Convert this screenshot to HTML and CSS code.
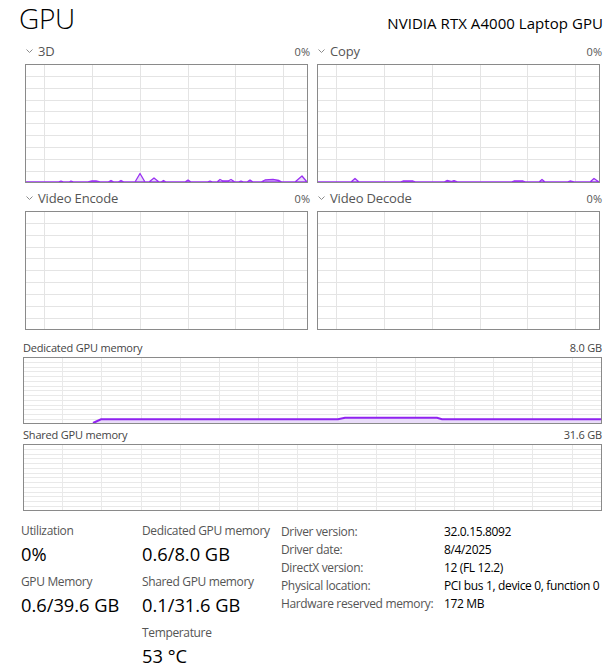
FILE: index.html
```html
<!DOCTYPE html>
<html>
<head>
<meta charset="utf-8">
<link rel="stylesheet" href="styles.css">
</head>
<body>
<div class="app">
  <header class="top">
    <h1 class="title">GPU</h1>
    <div class="model">NVIDIA RTX A4000 Laptop GPU</div>
  </header>

  <section class="engines">
    <div class="engine">
      <div class="engine-head">
        <span class="engine-name"><svg class="chev" width="7" height="4" viewBox="0 0 7 4"><polyline points="0.5,0.5 3.5,3.5 6.5,0.5"/></svg>3D</span>
        <span class="pct">0%</span>
      </div>
      <svg class="chart" width="283" height="119" viewBox="0 0 283 119">
        <g class="grid">
          <path d="M1 12.5H282M1 24.5H282M1 36.5H282M1 47.5H282M1 59.5H282M1 71.5H282M1 83.5H282M1 95.5H282M1 107.5H282"/>
          <path d="M19.5 1V118M67.5 1V118M115.5 1V118M163.5 1V118M210.5 1V118M258.5 1V118"/>
        </g>
        <path class="area" d="M1 118 L33 118 L36 117 L39 118 L44 118 L46 117 L49 118 L63 118 L67 117 L71 117 L75 118 L83 118 L86 116.5 L89 118 L93 118 L96 116.5 L99 118 L110 118 L115 109.5 L120 118 L124 118 L129 114 L134 118 L136 118 L138.5 116.5 L141 118 L160 118 L163 116 L166 118 L182 118 L185 117 L188 118 L192 118 L195 115.5 L198 117 L203 117 L206 115.5 L210 118 L213 118 L216 117 L219 118 L222 118 L225 116 L228 118 L236 118 L240 116 L248 115.5 L254 116.5 L257 118 L270 118 L277 112 L282 118 Z"/>
        <rect class="frame" x="0.5" y="0.5" width="282" height="118"/>
      </svg>
    </div>
    <div class="engine">
      <div class="engine-head">
        <span class="engine-name"><svg class="chev" width="7" height="4" viewBox="0 0 7 4"><polyline points="0.5,0.5 3.5,3.5 6.5,0.5"/></svg>Copy</span>
        <span class="pct">0%</span>
      </div>
      <svg class="chart" width="283" height="119" viewBox="0 0 283 119">
        <g class="grid">
          <path d="M1 12.5H282M1 24.5H282M1 36.5H282M1 47.5H282M1 59.5H282M1 71.5H282M1 83.5H282M1 95.5H282M1 107.5H282"/>
          <path d="M19.5 1V118M67.5 1V118M115.5 1V118M163.5 1V118M210.5 1V118M258.5 1V118"/>
        </g>
        <path class="area" d="M1 118 L34 118 L38 114.5 L42 118 L83 118 L86 117 L96 117 L99 118 L127 118 L130 116.5 L134 117.5 L137 116.5 L141 118 L194 118 L197 117 L206 117 L209 118 L222 118 L225 115.5 L228 118 L250 118 L253 117 L257 118 L273 118 L277 114.5 L282 118 Z"/>
        <rect class="frame" x="0.5" y="0.5" width="282" height="118"/>
      </svg>
    </div>
    <div class="engine">
      <div class="engine-head">
        <span class="engine-name"><svg class="chev" width="7" height="4" viewBox="0 0 7 4"><polyline points="0.5,0.5 3.5,3.5 6.5,0.5"/></svg>Video Encode</span>
        <span class="pct">0%</span>
      </div>
      <svg class="chart" width="283" height="119" viewBox="0 0 283 119">
        <g class="grid">
          <path d="M1 12.5H282M1 24.5H282M1 36.5H282M1 47.5H282M1 59.5H282M1 71.5H282M1 83.5H282M1 95.5H282M1 107.5H282"/>
          <path d="M19.5 1V118M67.5 1V118M115.5 1V118M163.5 1V118M210.5 1V118M258.5 1V118"/>
        </g>
        <rect class="frame" x="0.5" y="0.5" width="282" height="118"/>
      </svg>
    </div>
    <div class="engine">
      <div class="engine-head">
        <span class="engine-name"><svg class="chev" width="7" height="4" viewBox="0 0 7 4"><polyline points="0.5,0.5 3.5,3.5 6.5,0.5"/></svg>Video Decode</span>
        <span class="pct">0%</span>
      </div>
      <svg class="chart" width="283" height="119" viewBox="0 0 283 119">
        <g class="grid">
          <path d="M1 12.5H282M1 24.5H282M1 36.5H282M1 47.5H282M1 59.5H282M1 71.5H282M1 83.5H282M1 95.5H282M1 107.5H282"/>
          <path d="M19.5 1V118M67.5 1V118M115.5 1V118M163.5 1V118M210.5 1V118M258.5 1V118"/>
        </g>
        <rect class="frame" x="0.5" y="0.5" width="282" height="118"/>
      </svg>
    </div>
  </section>

  <section class="memory">
    <div class="mem-head"><span>Dedicated GPU memory</span><span>8.0 GB</span></div>
    <svg class="chart" width="579" height="67" viewBox="0 0 579 67">
      <g class="grid light">
        <path d="M1 5.5H578M1 10.5H578M1 14.5H578M1 19.5H578M1 24.5H578M1 29.5H578M1 33.5H578M1 38.5H578M1 43.5H578M1 48.5H578M1 52.5H578M1 57.5H578M1 62.5H578"/>
        <path d="M39.5 1V66M78.5 1V66M118.5 1V66M157.5 1V66M196.5 1V66M235.5 1V66M274.5 1V66M314.5 1V66M353.5 1V66M392.5 1V66M431.5 1V66M470.5 1V66M509.5 1V66M549.5 1V66"/>
      </g>
      <path class="area mem" d="M70 66 L78 62.3 L315 62.3 L322 60.8 L414 60.8 L419 62.3 L578 62.3 L578 66 Z"/>
      <path class="line" d="M70 66 L78 62.3 L315 62.3 L322 60.8 L414 60.8 L419 62.3 L578 62.3"/>
      <rect class="frame" x="0.5" y="0.5" width="578" height="66"/>
    </svg>
    <div class="mem-head second"><span>Shared GPU memory</span><span>31.6 GB</span></div>
    <svg class="chart" width="579" height="67" viewBox="0 0 579 67">
      <g class="grid light">
        <path d="M1 5.5H578M1 10.5H578M1 14.5H578M1 19.5H578M1 24.5H578M1 29.5H578M1 33.5H578M1 38.5H578M1 43.5H578M1 48.5H578M1 52.5H578M1 57.5H578M1 62.5H578"/>
        <path d="M39.5 1V66M78.5 1V66M118.5 1V66M157.5 1V66M196.5 1V66M235.5 1V66M274.5 1V66M314.5 1V66M353.5 1V66M392.5 1V66M431.5 1V66M470.5 1V66M509.5 1V66M549.5 1V66"/>
      </g>
      <rect class="frame" x="0.5" y="0.5" width="578" height="66"/>
    </svg>
  </section>

  <section class="stats">
    <div class="col col1">
      <div class="stat"><div class="stat-label">Utilization</div><div class="stat-value">0%</div></div>
      <div class="stat"><div class="stat-label">GPU Memory</div><div class="stat-value">0.6/39.6 GB</div></div>
    </div>
    <div class="col col2">
      <div class="stat"><div class="stat-label">Dedicated GPU memory</div><div class="stat-value">0.6/8.0 GB</div></div>
      <div class="stat"><div class="stat-label">Shared GPU memory</div><div class="stat-value">0.1/31.6 GB</div></div>
      <div class="stat"><div class="stat-label">Temperature</div><div class="stat-value">53 °C</div></div>
    </div>
    <dl class="details">
      <dt>Driver version:</dt><dd>32.0.15.8092</dd>
      <dt>Driver date:</dt><dd>8/4/2025</dd>
      <dt>DirectX version:</dt><dd>12 (FL 12.2)</dd>
      <dt>Physical location:</dt><dd>PCI bus 1, device 0, function 0</dd>
      <dt>Hardware reserved memory:</dt><dd>172 MB</dd>
    </dl>
  </section>
</div>
</body>
</html>
```

FILE: styles.css
```css
* { box-sizing: border-box; }
html, body {
  margin: 0;
  padding: 0;
  background: #fff;
}
body {
  font-family: "Segoe UI", "Open Sans", "Noto Sans", sans-serif;
  color: #000;
  width: 615px;
  height: 670px;
  overflow: hidden;
}
.top {
  display: flex;
  justify-content: space-between;
  align-items: baseline;
  height: 42px;
  padding: 0 12px 0 19px;
}
.title {
  margin: 0;
  font-size: 28px;
  font-weight: 300;
  line-height: 36px;
  letter-spacing: -0.3px;
}
.model {
  font-size: 15px;
  line-height: 20px;
  letter-spacing: 0.05px;
}

.engines {
  display: grid;
  grid-template-columns: 283px 283px;
  column-gap: 9px;
  row-gap: 6px;
  padding-left: 25px;
}
.engine-head {
  display: flex;
  justify-content: space-between;
  align-items: baseline;
  height: 22px;
  padding-left: 1px;
  margin-right: -2px;
  line-height: 18px;
}
.engine-name {
  font-size: 13px;
  color: #555;
  letter-spacing: -0.15px;
}
.chev {
  display: inline-block;
  vertical-align: 3px;
  margin-right: 5px;
  fill: none;
  stroke: #8c8c8c;
  stroke-width: 1;
}
.pct {
  font-size: 11px;
  color: #555;
}
.chart {
  display: block;
}
.chart .grid path {
  stroke: #e4e4e4;
  stroke-width: 1;
  fill: none;
}
.chart .grid.light path {
  stroke: #e9e9e9;
}
.frame {
  fill: none;
  stroke: #8a8a8a;
  stroke-width: 1;
}
.area {
  fill: #e9dcf9;
  stroke: #9a30f2;
  stroke-width: 1.3;
  stroke-linejoin: round;
}
.area.mem {
  stroke: none;
}
.line {
  fill: none;
  stroke: #8f22f0;
  stroke-width: 2;
}

.memory {
  padding-left: 23px;
  width: 602px;
  margin-top: 11px;
}
.mem-head {
  display: flex;
  justify-content: space-between;
  font-size: 11px;
  line-height: 14px;
  color: #444;
  letter-spacing: -0.2px;
  margin-bottom: 2px;
}
.mem-head.second {
  margin-top: 4px;
}

.stats {
  display: flex;
  align-items: flex-start;
  padding-left: 21px;
  margin-top: 12px;
}
.col1 { width: 121px; }
.col2 { width: 139px; }
.stat { margin-bottom: 5px; }
.stat-label {
  font-size: 12px;
  line-height: 16px;
  color: #555;
  letter-spacing: -0.35px;
}
.stat-value {
  font-size: 18.3px;
  line-height: 30px;
  color: #000;
}
.details {
  margin: 0;
  display: grid;
  grid-template-columns: 163px auto;
  align-content: start;
  font-size: 12px;
  line-height: 18px;
  letter-spacing: -0.35px;
}
.details dt {
  color: #555;
}
.details dd {
  margin: 0;
  color: #000;
}
```
